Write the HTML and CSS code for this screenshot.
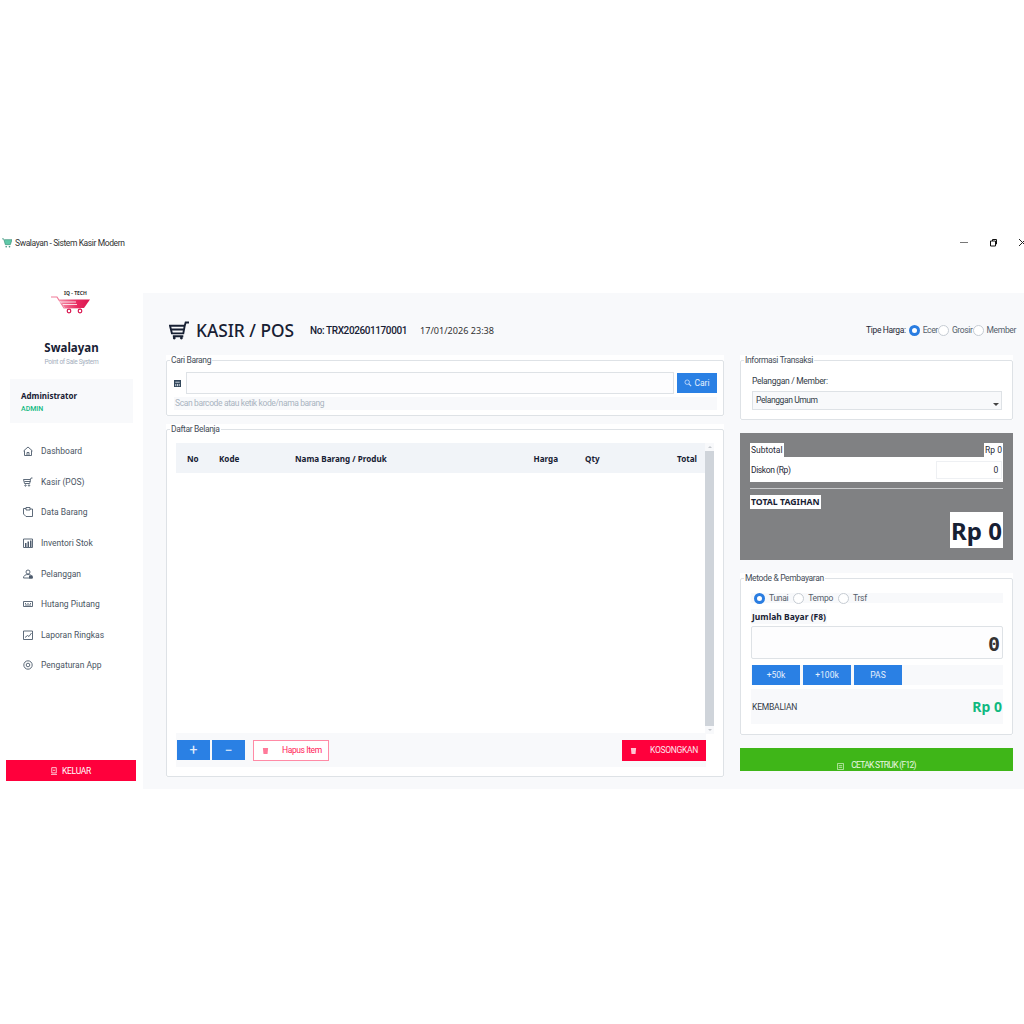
FILE: index.html
```html
<!DOCTYPE html>
<html lang="id">
<head>
  <meta charset="UTF-8" />
  <title>Swalayan - Sistem Kasir Modern</title>
  <link rel="stylesheet" href="styles.css">
</head>
<body>
  <header class="titlebar">
    <div class="titlebar-name">
      <svg class="app-icon" viewBox="0 0 12 12"><path d="M0 1h2l2 7h6l2-6H3" fill="#5fc9a8" stroke="#3c8f7a" stroke-width=".8"/><circle cx="5" cy="10.500" r="1" fill="#3c8f7a"/><circle cx="9" cy="10.500" r="1" fill="#3c8f7a"/></svg>
      <span>Swalayan - Sistem Kasir Modern</span>
    </div>
    <div class="titlebar-controls">
      <svg viewBox="0 0 9 9"><path d="M0 4.500h8" stroke="#777" fill="none"/></svg>
      <svg viewBox="0 0 9 9"><path d="M1.500 3h5v5h-5zM3.500 3v-1.500h4v4.500h-1" stroke="#111" fill="none"/></svg>
      <svg viewBox="0 0 9 9"><path d="M1 1l7 7M8 1l-7 7" stroke="#222" fill="none"/></svg>
    </div>
  </header>

  <div class="app">
    <aside class="sidebar">
      <div class="logo">
        <span class="logo-text">IQ - TECH</span>
        <svg class="logo-cart" viewBox="0 0 40 18">
          <defs>
            <linearGradient id="merah" x1="0" x2="1"><stop offset="0" stop-color="#f590a8"/><stop offset=".6" stop-color="#e8285f"/><stop offset="1" stop-color="#d9164f"/></linearGradient>
          </defs>
          <path d="M0 1h6l7 11h17" fill="none" stroke="#f07a98" stroke-width="1.200"/>
          <path d="M8 3.500h31l-6 8.500H14z" fill="url(#merah)"/>
          <path d="M8 6h17M12 8.500h14" stroke="#fff" stroke-width=".8"/>
          <circle cx="18" cy="15" r="1.800" fill="none" stroke="#d9164f" stroke-width="1.200"/>
          <circle cx="29" cy="15" r="1.800" fill="none" stroke="#d9164f" stroke-width="1.200"/>
        </svg>
      </div>
      <div class="brand">Swalayan</div>
      <div class="brand-sub">Point of Sale System</div>

      <div class="user-card">
        <div class="user-name">Administrator</div>
        <div class="user-role">ADMIN</div>
      </div>

      <nav class="menu">
        <a class="menu-item"><svg viewBox="0 0 10 10"><path d="M.5 5L5 1l4.500 4M1.500 4.500v5h7v-5M4 9.500v-3h2v3"/></svg>Dashboard</a>
        <a class="menu-item"><svg viewBox="0 0 10 10"><path d="M.5 2.500h7l-.8 4H1.500zM7.500 2.500L8 1h1.500M1.500 4.500h6"/><circle cx="2.500" cy="8.500" r=".7"/><circle cx="6" cy="8.500" r=".7"/></svg>Kasir (POS)</a>
        <a class="menu-item"><svg viewBox="0 0 10 10"><path d="M3 1.500H.5V7l2.500 2.500h6.500V2H7M3 .5h4v2.500H3z"/></svg>Data Barang</a>
        <a class="menu-item"><svg viewBox="0 0 10 10"><path d="M.5 1h9v8.500h-9z"/><path class="solid" d="M2 5h1.500v4H2zM4.500 3.500H6V9H4.500zM7 2.500h1.500V9H7z"/></svg>Inventori Stok</a>
        <a class="menu-item"><svg viewBox="0 0 10 10"><circle cx="5" cy="3" r="2"/><path d="M.5 9c0-2.500 2-3.500 4.500-3.500S9.500 6.500 9.500 9z"/><path class="solid" d="M6 6.500h3.500V9.500H6z"/></svg>Pelanggan</a>
        <a class="menu-item"><svg viewBox="0 0 10 10"><path d="M.5 2.500h9v5h-9z"/><path d="M2 4.500h1M4.500 4.500h1M7 4.500h1M2 6h6"/></svg>Hutang Piutang</a>
        <a class="menu-item"><svg viewBox="0 0 10 10"><path d="M.5 1v8.500h9V1zM2 7.500l2.500-2 1.500 1L8.500 3"/></svg>Laporan Ringkas</a>
        <a class="menu-item"><svg viewBox="0 0 10 10"><circle cx="5" cy="5" r="4.200"/><circle cx="5" cy="5" r="1.800"/></svg>Pengaturan App</a>
      </nav>

      <button class="btn-keluar">
        <svg viewBox="0 0 8 10"><path d="M1 .5h6v7H1zM0 9.500h8" fill="none" stroke="#fff"/><path d="M2.500 4h3" stroke="#fff"/></svg>
        KELUAR
      </button>
    </aside>

    <main class="content">
      <div class="top-bar">
        <svg class="title-icon" viewBox="0 0 22 20"><path d="M1 5h15.500l-1.500 8H3zM16.500 5L17.500 1.500H21M2 9h14M4 16h11" fill="none" stroke="#172033" stroke-width="2"/><circle cx="5.500" cy="18" r="1.500" fill="#172033"/><circle cx="13" cy="18" r="1.500" fill="#172033"/></svg>
        <h1>KASIR / POS</h1>
        <span class="trx-no">No: TRX202601170001</span>
        <span class="trx-date">17/01/2026 23:38</span>
        <div class="price-type">
          <span class="price-label">Tipe Harga:</span>
          <span class="radio checked"></span><span class="radio-text">Ecer</span>
          <span class="radio"></span><span class="radio-text">Grosir</span>
          <span class="radio"></span><span class="radio-text">Member</span>
        </div>
      </div>

      <div class="columns">
        <div class="col-left">
          <div class="group">
            <fieldset class="cari-box">
              <legend>Cari Barang</legend>
              <div class="cari-body">
                <div class="cari-row">
                  <svg class="cari-icon" viewBox="0 0 8 8"><path d="M0 0h8v8H0z" fill="#33475b"/><path d="M1.500 2.500h5M2 4.500V7M4 4.500V7M6 4.500V7" stroke="#dfe6ee"/></svg>
                  <div class="cari-input"></div>
                  <button class="btn-blue btn-cari">
                    <svg viewBox="0 0 10 10"><circle cx="4" cy="4" r="2.800" fill="none" stroke="#cfe2fb"/><path d="M6 6l3 3" stroke="#cfe2fb" stroke-width="1.400"/></svg>
                    Cari
                  </button>
                </div>
                <div class="cari-hint">Scan barcode atau ketik kode/nama barang</div>
              </div>
            </fieldset>
          </div>

          <div class="group group-grow">
            <fieldset class="belanja-box">
              <legend>Daftar Belanja</legend>
              <div class="belanja-body">
                <div class="table-wrap">
                  <table class="cart-table">
                    <colgroup>
                      <col class="c-no"><col class="c-kode"><col class="c-nama"><col class="c-harga"><col class="c-qty"><col class="c-total">
                    </colgroup>
                    <thead>
                      <tr>
                        <th>No</th><th>Kode</th><th>Nama Barang / Produk</th>
                        <th class="right">Harga</th><th class="qty">Qty</th><th class="right total">Total</th>
                      </tr>
                    </thead>
                  </table>
                  <div class="scrollbar"><div class="scroll-thumb"></div></div>
                </div>
                <div class="cart-actions">
                  <button class="btn-blue btn-qty">+</button>
                  <button class="btn-blue btn-qty">&minus;</button>
                  <button class="btn-hapus">
                    <svg viewBox="0 0 8 8"><path d="M1 1h6L6.300 8H1.700z" fill="#ff7a9a"/></svg>
                    Hapus Item
                  </button>
                  <button class="btn-kosong">
                    <svg viewBox="0 0 8 8"><path d="M1 1h6L6.300 8H1.700z" fill="#ffc4d2"/></svg>
                    KOSONGKAN
                  </button>
                </div>
              </div>
            </fieldset>
          </div>
        </div>

        <div class="col-right">
          <div class="group">
            <fieldset class="info-box">
              <legend>Informasi Transaksi</legend>
              <div class="info-body">
                <label class="field-label">Pelanggan / Member:</label>
                <div class="select-box">Pelanggan Umum<span class="select-arrow"></span></div>
              </div>
            </fieldset>
          </div>

          <section class="summary">
            <div class="sum-row">
              <span class="sum-chip">Subtotal</span>
              <span class="sum-chip">Rp 0</span>
            </div>
            <div class="diskon-row">
              <span>Diskon (Rp)</span>
              <div class="diskon-input">0</div>
            </div>
            <hr class="sum-line">
            <div class="total-label"><span class="sum-chip">TOTAL TAGIHAN</span></div>
            <div class="total-value"><span>Rp 0</span></div>
          </section>

          <div class="group">
            <fieldset class="bayar-box">
              <legend>Metode &amp; Pembayaran</legend>
              <div class="bayar-body">
                <div class="metode-row">
                  <span class="radio checked"></span><span class="radio-text">Tunai</span>
                  <span class="radio"></span><span class="radio-text">Tempo</span>
                  <span class="radio"></span><span class="radio-text">Trsf</span>
                </div>
                <div class="bayar-label"><span>Jumlah Bayar (F8)</span></div>
                <div class="bayar-input">0</div>
                <div class="quick-row">
                  <button class="btn-blue btn-quick">+50k</button>
                  <button class="btn-blue btn-quick">+100k</button>
                  <button class="btn-blue btn-quick">PAS</button>
                </div>
                <div class="kembali-row">
                  <span>KEMBALIAN</span>
                  <strong>Rp 0</strong>
                </div>
              </div>
            </fieldset>
          </div>

          <button class="btn-cetak">
            <svg viewBox="0 0 8 8"><path d="M.5.5h7v7h-7zM2 3h4M2 5h4" fill="none" stroke="#bfe8b0"/></svg>
            CETAK STRUK (F12)
          </button>
        </div>
      </div>
    </main>
  </div>
</body>
</html>
```

FILE: styles.css
```css
body {
  margin: 0;
  padding-top: 228px;
  background: #fff;
  color: #1f2937;
  font-family: Roboto, "Noto Sans", sans-serif;
  font-size: 8.500px;
}

button {
  font-family: inherit;
  border: none;
  padding: 0;
  cursor: pointer;
}

/* title bar */
.titlebar {
  display: flex;
  justify-content: space-between;
  align-items: center;
  height: 29px;
  overflow: hidden;
}

.titlebar-name {
  display: flex;
  align-items: center;
  gap: 3px;
  padding-left: 2px;
  color: #333;
  letter-spacing: -.4px;
}

.app-icon {
  width: 10px;
  height: 10px;
}

.titlebar-controls {
  display: flex;
  gap: 20px;
  margin-right: -3px;
}

.titlebar-controls svg {
  width: 9px;
  height: 9px;
}

/* sidebar */
.app {
  display: flex;
  height: 532px;
}

.sidebar {
  width: 143px;
  flex: none;
  display: flex;
  flex-direction: column;
  align-items: center;
  box-sizing: border-box;
  padding-bottom: 8px;
}

.logo {
  width: 40px;
  margin-top: 33px;
  height: 24px;
  margin-left: -2px;
}

.logo-text {
  display: block;
  text-align: center;
  font-family: "Noto Sans", sans-serif;
  font-size: 5px;
  line-height: 6px;
  font-weight: 700;
  color: #333;
  padding-left: 10px;
}

.logo-cart {
  display: block;
  width: 40px;
  height: 18px;
}

.brand {
  margin-top: 25px;
  font-family: "Noto Sans", sans-serif;
  font-size: 11.500px;
  line-height: 18px;
  font-weight: 700;
  color: #172033;
}

.brand-sub {
  font-size: 6.500px;
  line-height: 10px;
  letter-spacing: -.3px;
  color: #a3aebd;
}

.user-card {
  align-self: stretch;
  margin: 12px 10px 0;
  height: 44px;
  box-sizing: border-box;
  padding: 11px 11px 0;
  background: #f8f9fb;
}

.user-name {
  font-family: "Noto Sans", sans-serif;
  font-size: 8px;
  line-height: 12px;
  font-weight: 700;
  color: #172033;
}

.user-role {
  margin-top: 1px;
  font-size: 7px;
  line-height: 12px;
  font-weight: 500;
  color: #10b981;
}

.menu {
  align-self: stretch;
  margin-top: 13px;
  display: flex;
  flex-direction: column;
}

.menu-item {
  display: flex;
  align-items: center;
  gap: 8px;
  height: 30.600px;
  padding-left: 23px;
  color: #4b5563;
}

.menu-item svg {
  width: 10px;
  height: 10px;
  fill: none;
  stroke: #4d5b6c;
  stroke-width: .9;
}

.menu-item .solid {
  fill: #4d5b6c;
  stroke: none;
}

.btn-keluar {
  margin-top: auto;
  width: 130px;
  height: 21px;
  margin-right: 1px;
  display: flex;
  justify-content: center;
  align-items: center;
  gap: 5px;
  background: #ff003c;
  color: #fff;
  font-size: 8.500px;
  letter-spacing: -.3px;
}

.btn-keluar svg {
  width: 6px;
  height: 8px;
}

/* main area */
.content {
  flex: 1;
  margin-top: 36px;
  padding: 0 11px 0 23px;
  background: #f8f9fb;
  min-width: 0;
}

.top-bar {
  display: flex;
  align-items: center;
  height: 62px;
  padding: 12px 0 0 3px;
  box-sizing: border-box;
  margin-right: -3px;
}

.title-icon {
  width: 21px;
  height: 19px;
  margin-right: 6px;
}

h1 {
  margin: 0 16px 0 0;
  font-family: "Noto Sans", sans-serif;
  font-size: 17.300px;
  font-weight: 500;
  color: #172033;
}

.trx-no {
  font-size: 10px;
  font-weight: 500;
  letter-spacing: -.4px;
  color: #172033;
  margin-right: 13px;
}

.trx-date {
  font-family: "Noto Sans", sans-serif;
  font-size: 9.100px;
  color: #333;
}

.price-type {
  margin-left: auto;
  display: flex;
  align-items: center;
  letter-spacing: -.35px;
}

.price-label {
  color: #1f2937;
  margin-right: 3px;
}

.radio {
  width: 9px;
  height: 9px;
  flex: none;
  border: 1px solid #c6ccd3;
  border-radius: 50%;
  background: #fff;
}

.radio.checked {
  border: 3px solid #2a7de1;
  width: 5px;
  height: 5px;
}

.radio-text {
  margin-left: 3px;
  color: #555e6b;
}

.columns {
  display: grid;
  grid-template-columns: 558px 273px;
  column-gap: 16px;
  height: 422px;
}

.col-left,
.col-right {
  display: flex;
  flex-direction: column;
  min-height: 0;
}

.col-left {
  gap: 8px;
}

.col-right {
  gap: 13px;
}

/* group boxes */
.group {
  background: #fff;
}

.group-grow {
  flex: 1;
  display: flex;
}

fieldset {
  margin: 0;
  padding: 0;
  border: 1px solid #dee2e6;
  border-radius: 2px;
  min-width: 0;
  box-sizing: border-box;
}

legend {
  margin-left: 3px;
  padding: 0 1px;
  line-height: 11px;
  letter-spacing: -.35px;
  color: #444c58;
}

.cari-box {
  height: 61px;
}

.cari-body {
  padding: 6px 6px 6px 7px;
}

.cari-row {
  display: flex;
  align-items: center;
  height: 22px;
}

.cari-icon {
  width: 7px;
  height: 7px;
  margin-right: 5px;
  flex: none;
}

.cari-input {
  flex: 1;
  height: 22px;
  box-sizing: border-box;
  border: 1px solid #dee2e6;
  background: #fdfdfe;
  margin-right: 3px;
}

.btn-blue {
  background: #2a80e4;
  color: #e6f0fc;
}

.btn-cari {
  display: flex;
  align-items: center;
  justify-content: center;
  gap: 2px;
  width: 40px;
  height: 20px;
  font-size: 8.500px;
}

.btn-cari svg {
  width: 8px;
  height: 8px;
}

.cari-hint {
  margin-top: 3px;
  height: 13px;
  line-height: 13px;
  background: #f8f9fb;
  color: #a9b4c0;
  letter-spacing: -.38px;
  padding-left: 1px;
}

.belanja-box {
  flex: 1;
  display: flex;
  flex-direction: column;
}

.belanja-body {
  flex: 1;
  display: flex;
  flex-direction: column;
  padding: 8px 9px 9px 9px;
  min-height: 0;
}

.table-wrap {
  flex: 1;
  display: flex;
  min-height: 0;
}

.cart-table {
  width: 529px;
  height: 30px;
  table-layout: fixed;
  border-collapse: collapse;
  background: #f1f4f8;
}

.c-no { width: 32px; }
.c-kode { width: 76px; }
.c-nama { width: 216px; }
.c-harga { width: 69px; }
.c-qty { width: 60px; }
.c-total { width: 76px; }

.cart-table th {
  padding: 0 11px;
  text-align: left;
  font-family: "Noto Sans", sans-serif;
  font-size: 8.100px;
  font-weight: 700;
  color: #172033;
  white-space: nowrap;
}

.cart-table th.right {
  text-align: right;
}

.cart-table th.qty {
  padding-left: 16px;
}

.cart-table th.total {
  padding-right: 8px;
}

.scrollbar {
  position: relative;
  width: 9px;
  box-sizing: border-box;
  padding: 8px 0;
  background: #f8f9fb;
}

.scrollbar::before,
.scrollbar::after {
  content: "";
  position: absolute;
  left: 3px;
  border-left: 2px solid transparent;
  border-right: 2px solid transparent;
}

.scrollbar::before {
  top: 3px;
  border-bottom: 2px solid #c4c8cd;
}

.scrollbar::after {
  bottom: 3px;
  border-top: 2px solid #c4c8cd;
}

.scroll-thumb {
  height: 100%;
  background: #cfd4da;
}

.cart-actions {
  display: flex;
  align-items: center;
  height: 34px;
  width: 530px;
  margin-top: -1px;
  gap: 2px;
  background: #f8f9fb;
  padding-left: 1px;
  box-sizing: border-box;
  position: relative;
}

.btn-qty {
  width: 33px;
  height: 20px;
  font-size: 14px;
  line-height: 18px;
}

.btn-hapus {
  margin-left: 6px;
  width: 76px;
  height: 21px;
  box-sizing: border-box;
  border: 1px solid #ff8ba6;
  background: #fff;
  color: #ff2358;
  font-size: 8.500px;
  letter-spacing: -.4px;
  display: flex;
  align-items: center;
  gap: 13px;
  padding-left: 8px;
}

.btn-hapus svg,
.btn-kosong svg {
  width: 7px;
  height: 7px;
}

.btn-kosong {
  margin-left: auto;
  width: 84px;
  height: 21px;
  background: #ff003c;
  color: #fbe6ec;
  font-size: 8.500px;
  letter-spacing: -.3px;
  display: flex;
  align-items: center;
  gap: 13px;
  padding-left: 8px;
  box-sizing: border-box;
}

/* right column */
.info-box {
  height: 65px;
}

.info-body {
  padding: 8px 10px 0 11px;
}

.field-label {
  display: block;
  line-height: 14px;
  letter-spacing: -.3px;
  color: #333c48;
}

.select-box {
  position: relative;
  margin-top: 3px;
  height: 19px;
  line-height: 17px;
  box-sizing: border-box;
  border: 1px solid #dee2e6;
  background: #f8f9fb;
  padding-left: 3px;
  letter-spacing: -.4px;
  color: #333c48;
}

.select-arrow {
  position: absolute;
  right: 2px;
  bottom: 3px;
  border-left: 3px solid transparent;
  border-right: 3px solid transparent;
  border-top: 3px solid #444;
}

.summary {
  height: 127px;
  box-sizing: border-box;
  padding: 10px 10px 0;
  background: #808183;
}

.sum-row {
  display: flex;
  justify-content: space-between;
  height: 14px;
}

.sum-chip {
  background: #fff;
  padding: 0 1px;
  line-height: 14px;
  color: #1f2937;
}

.diskon-row {
  display: flex;
  justify-content: space-between;
  align-items: center;
  height: 25px;
  padding: 0 1px;
  background: #fff;
  letter-spacing: -.4px;
}

.diskon-input {
  width: 66px;
  height: 18px;
  line-height: 16px;
  box-sizing: border-box;
  border: 1px solid #eef0f3;
  text-align: right;
  padding-right: 3px;
}

.sum-line {
  margin: 6px 0;
  border: none;
  border-top: 1px solid #c8cacc;
}

.total-label {
  height: 14px;
}

.total-label .sum-chip {
  display: inline-block;
  font-family: "Noto Sans", sans-serif;
  font-weight: 700;
  font-size: 8.700px;
  color: #172033;
}

.total-value {
  margin-top: 3px;
  text-align: right;
}

.total-value span {
  display: inline-block;
  height: 36px;
  line-height: 38px;
  padding: 0 1px;
  background: #fff;
  font-family: "Noto Sans", sans-serif;
  font-size: 24px;
  font-weight: 700;
  color: #172033;
}

.bayar-box {
  height: 162px;
}

.bayar-body {
  padding: 9px 9px 0 10px;
}

.metode-row {
  display: flex;
  align-items: center;
  height: 10px;
  background: #f8f9fb;
  letter-spacing: -.3px;
}

.metode-row .radio {
  margin-left: 4px;
}

.metode-row .radio-text {
  margin: 0 1px 0 4px;
}

.metode-row .radio:first-child {
  margin-left: 3px;
}

.bayar-label {
  margin-top: 6px;
  height: 15px;
}

.bayar-label span {
  display: inline-block;
  padding: 0 1px;
  line-height: 15px;
  font-family: "Noto Sans", sans-serif;
  font-size: 8.500px;
  font-weight: 700;
  color: #172033;
  background: #f8f9fb;
}

.bayar-input {
  margin-top: 2px;
  height: 33px;
  box-sizing: border-box;
  border: 1px solid #dee2e6;
  border-radius: 2px;
  background: #fdfdfe;
  text-align: right;
  padding-right: 2px;
  line-height: 34px;
  font-family: "DejaVu Sans Mono", monospace;
  font-weight: 700;
  font-size: 20px;
  color: #333;
}

.quick-row {
  display: flex;
  gap: 3px;
  margin-top: 6px;
  padding-left: 1px;
  background: #f8f9fb;
}

.btn-quick {
  width: 48px;
  height: 20px;
  font-size: 8.500px;
}

.kembali-row {
  display: flex;
  justify-content: space-between;
  align-items: center;
  margin-top: 4px;
  height: 35px;
  padding: 0 1px;
  background: #f8f9fb;
  color: #333c48;
}

.kembali-row span {
  letter-spacing: -.2px;
}

.kembali-row strong {
  font-family: "Noto Sans", sans-serif;
  font-size: 14px;
  color: #10b981;
}

.btn-cetak {
  height: 23px;
  background: #3fb618;
  color: #e8f7e2;
  font-size: 8.500px;
  letter-spacing: -.7px;
  display: flex;
  align-items: flex-end;
  justify-content: center;
  gap: 7px;
  line-height: 12px;
  flex: none;
}

.btn-cetak svg {
  width: 7px;
  height: 7px;
  margin-bottom: 1px;
}
```
